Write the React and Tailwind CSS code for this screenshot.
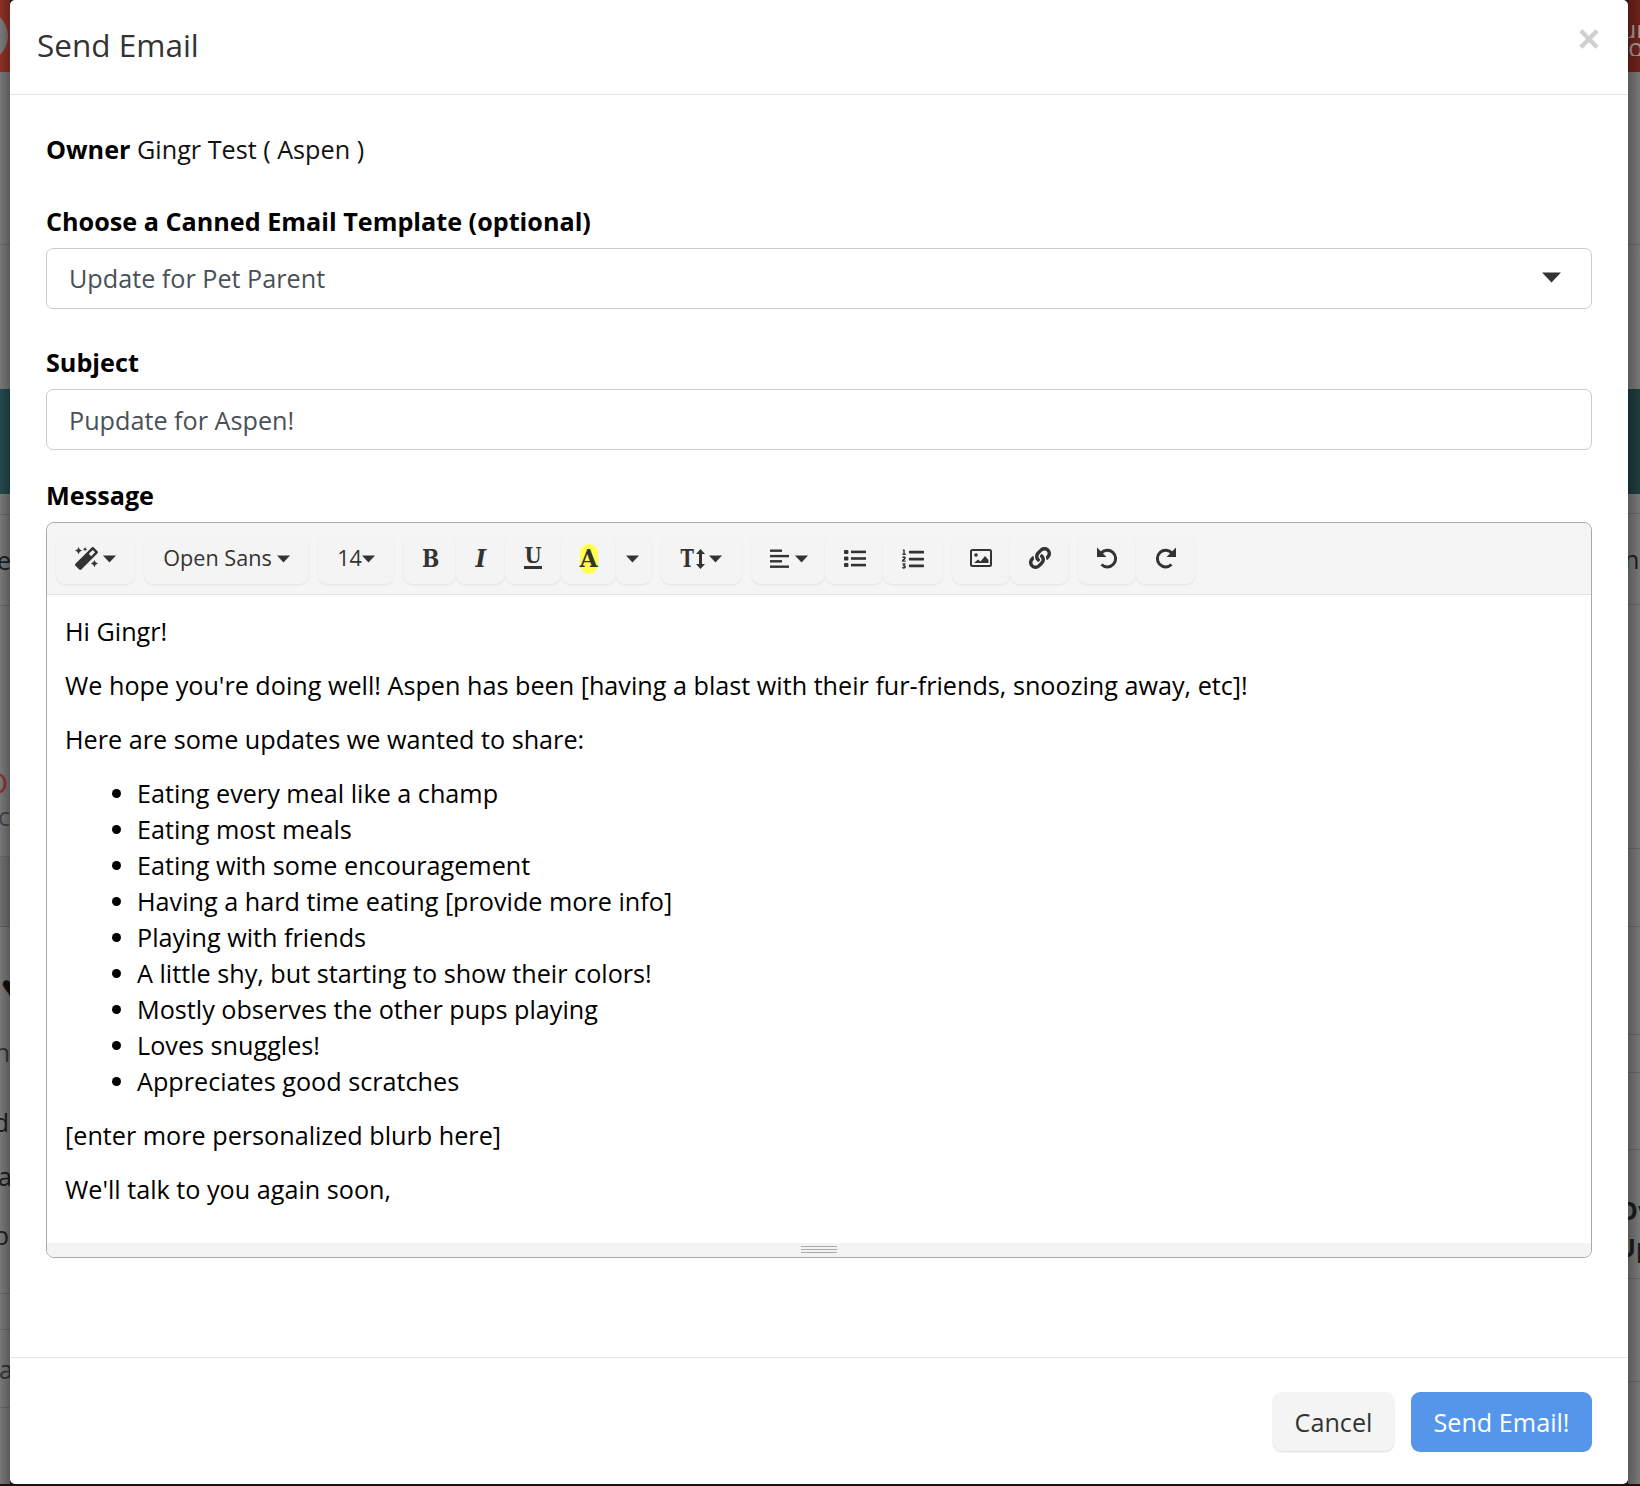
import { FaMagic, FaLink, FaListOl } from 'react-icons/fa'

const updates = [
  'Eating every meal like a champ',
  'Eating most meals',
  'Eating with some encouragement',
  'Having a hard time eating [provide more info]',
  'Playing with friends',
  'A little shy, but starting to show their colors!',
  'Mostly observes the other pups playing',
  'Loves snuggles!',
  'Appreciates good scratches',
]

function Caret({ className = '' }) {
  return (
    <svg width="13" height="8" viewBox="0 0 13 8" className={className}>
      <path d="M0 0.5h13L6.5 7.5z" fill="#333" />
    </svg>
  )
}

function ToolButton({ w, children }) {
  return (
    <button className={`${w} h-[50px] flex items-center justify-center gap-[5px] rounded-[9px] bg-[#f4f4f4] text-[#333] shadow-[0_1px_2px_rgba(0,0,0,0.08)]`}>
      {children}
    </button>
  )
}

function AlignIcon() {
  return (
    <svg width="20" height="20" viewBox="0 0 20 20" fill="#333" className="ml-[2px]">
      <rect x="0" y="0.500" width="12" height="2.4" />
      <rect x="0" y="5.900" width="19" height="2.4" />
      <rect x="0" y="11.100" width="12" height="2.4" />
      <rect x="0" y="16.500" width="19" height="2.4" />
    </svg>
  )
}

function BulletIcon() {
  return (
    <svg width="22" height="19" viewBox="0 0 22 19" fill="#333" className="ml-[2px] -mt-[1px]">
      <rect x="0" y="1" width="4.4" height="4" rx="1" />
      <rect x="7" y="1.6" width="15" height="2.6" />
      <rect x="0" y="7.5" width="4.4" height="4" rx="1" />
      <rect x="7" y="8.2" width="15" height="2.6" />
      <rect x="0" y="14" width="4.4" height="4" rx="1" />
      <rect x="7" y="14.8" width="15" height="2.6" />
    </svg>
  )
}

function ImageIcon() {
  return (
    <svg width="22" height="18" viewBox="0 0 22 18" className="-mt-[2px]">
      <rect x="1" y="1" width="20" height="16" rx="1.5" fill="none" stroke="#333" strokeWidth="2" />
      <circle cx="6" cy="6" r="1.8" fill="#333" />
      <path d="M4 14l4-3.5 2.5 2L15 7l3.5 4v3z" fill="#333" />
    </svg>
  )
}

function ResizeArrow() {
  return (
    <svg width="9" height="20" viewBox="0 0 9 20" fill="#333">
      <path d="M4.5 0L9 5H6v10h3l-4.500 5L0 15h3V5H0z" />
    </svg>
  )
}

function UndoIcon({ className = '' }) {
  return (
    <svg width="22" height="22" viewBox="0 0 22 22" className={`-mt-[2px] ${className}`}>
      <path d="M5 6.200A8.300 8.300 0 1 1 5.500 17.500" fill="none" stroke="#333" strokeWidth="3" />
      <path d="M1 0.500v9.500h9.500z" fill="#333" />
    </svg>
  )
}

const slab = "font-['DejaVu_Serif',serif] font-bold text-[25px] leading-none"

function Toolbar() {
  return (
    <div className="h-[72px] flex items-center gap-[9px] pl-[9px] bg-[#f5f5f5] border-b border-[#e2e2e2] rounded-t-[7px]">
      <ToolButton w="w-[79px]">
        <FaMagic size={23} />
        <Caret />
      </ToolButton>
      <ToolButton w="w-[165px]">
        <span className="text-[21.6px] pb-[2px]">Open Sans</span>
        <Caret />
      </ToolButton>
      <ToolButton w="w-[76px]">
        <span className="text-[21.6px] pb-[2px]">14</span>
        <Caret className="-ml-[5px]" />
      </ToolButton>
      <div className="flex">
        <ToolButton w="w-[53px]"><span className={`${slab} scale-x-[0.82] ml-[2px]`}>B</span></ToolButton>
        <ToolButton w="w-[49px]"><span className={`${slab} italic scale-x-[0.9]`}>I</span></ToolButton>
        <ToolButton w="w-[56px]">
          <span className="flex flex-col items-center gap-[2px] -mt-[2px]">
            <span className="font-['DejaVu_Serif',serif] font-bold text-[23px] leading-[18px] scale-x-[0.85]">U</span>
            <span className="w-[18px] h-[2.500px] bg-[#333]" />
          </span>
        </ToolButton>
        <ToolButton w="w-[55px]">
          <span className="w-[18px] h-[30px] flex items-center justify-center rounded-[9px] bg-[#ffff4d]">
            <span className={`${slab} scale-x-[0.92]`}>A</span>
          </span>
        </ToolButton>
        <ToolButton w="w-[36px]"><Caret className="-ml-[4px]" /></ToolButton>
      </div>
      <ToolButton w="w-[81px]">
        <span className="flex items-center gap-[1px] -ml-[1px]">
          <span className={`${slab} scale-x-[0.72] -mx-[2px]`}>T</span>
          <ResizeArrow />
        </span>
        <Caret className="-ml-[1px]" />
      </ToolButton>
      <div className="flex">
        <ToolButton w="w-[74px]"><AlignIcon /><Caret /></ToolButton>
        <ToolButton w="w-[58px]"><BulletIcon /></ToolButton>
        <ToolButton w="w-[60px]"><FaListOl size={22} /></ToolButton>
      </div>
      <div className="flex">
        <ToolButton w="w-[58px]"><ImageIcon /></ToolButton>
        <ToolButton w="w-[59px]"><span className="-mt-[2px]"><FaLink size={22} /></span></ToolButton>
      </div>
      <div className="flex">
        <ToolButton w="w-[58px]"><UndoIcon /></ToolButton>
        <ToolButton w="w-[59px]"><UndoIcon className="-scale-x-100" /></ToolButton>
      </div>
    </div>
  )
}

// the dimmed page that shows on both sides of the modal
function Strip({ side, rows }) {
  return (
    <div className={`relative ${side === 'left' ? 'w-[10px]' : 'w-[12px]'} shrink-0 flex flex-col overflow-hidden bg-[#777] text-[#1c1c1c] text-[25px] leading-[36px]`}>
      {rows.map((r, i) => (
        <div key={i} style={{ height: r.h, background: r.bg, color: r.color, borderBottom: r.line ? '1px solid rgba(0,0,0,0.14)' : undefined, fontWeight: r.bold ? 700 : 400, fontSize: r.size }}
          className={`shrink-0 flex items-center whitespace-nowrap ${side === 'left' ? 'justify-end' : 'justify-start'}`}>
          {r.text && <span className="shrink-0" style={{ marginLeft: r.ml, marginRight: r.mr }}>{r.text}</span>}
          {r.blob && <div className="shrink-0 w-[52px] h-[52px] rounded-full bg-[#787878] mr-[2px]" />}
        </div>
      ))}
      <div className={`absolute inset-0 ${side === 'left' ? 'bg-gradient-to-r' : 'bg-gradient-to-l'} from-transparent to-black/25`} />
    </div>
  )
}

const leftRows = [
  { h: 72, bg: '#8c3026', blob: true },
  { h: 173, line: true },
  { h: 144 },
  { h: 105, bg: '#23494a' },
  { h: 21, line: true },
  { h: 91, line: true, text: 'se', mr: -1 },
  { h: 159 },
  { h: 36, text: 'D', color: '#8c3026', mr: 2, size: 29 },
  { h: 30, text: 'ic', color: '#444' },
  { h: 26, line: true },
  { h: 70, line: true, bg: '#6f6f6f' },
  { h: 41 },
  { h: 36, text: '♥', mr: -10, color: '#111', size: 32 },
  { h: 30 },
  { h: 36, text: 'n', color: '#333' },
  { h: 34 },
  { h: 36, text: 'd', mr: 1 },
  { h: 18 },
  { h: 36, text: 'a', mr: -2 },
  { h: 23 },
  { h: 36, text: 'o', mr: 1 },
  { h: 41, line: true },
  { h: 36, line: true },
  { h: 78, line: true, text: 'ta', color: '#333', mr: -3 },
  { h: 76 },
]

const rightRows = [
  { h: 20, bg: '#6d2219' },
  { h: 18, bg: '#6d2219', text: 'up', color: '#a09a98', ml: -7 },
  { h: 18, bg: '#6d2219', text: 'lo', color: '#a09a98', ml: -6 },
  { h: 16, bg: '#6d2219' },
  { h: 173, line: true },
  { h: 144 },
  { h: 105, bg: '#1f3c3d' },
  { h: 20, line: true },
  { h: 91, line: true, text: 'n', ml: -4 },
  { h: 244, line: true },
  { h: 78, line: true },
  { h: 108, line: true },
  { h: 38, line: true },
  { h: 77, line: true },
  { h: 42 },
  { h: 36, text: 'Ov', bold: true, ml: -10 },
  { h: 38, text: 'Up', bold: true, ml: -11 },
  { h: 13, line: true },
  { h: 103, line: true },
  { h: 102 },
]

export default function App() {
  return (
    <div className="h-[1486px] w-full flex flex-col bg-[#1a1010] font-['Open_Sans',sans-serif]">
      <div className="h-[1484px] flex">
        <Strip side="left" rows={leftRows} />

        <div className="flex-1 min-w-0 flex flex-col bg-white rounded-[5px] text-[25.2px] leading-[36px]">
          <div className="h-[95px] shrink-0 flex justify-between border-b border-[#e5e5e5] pl-[27px] pr-[28px]">
            <h4 className="mt-[27px] text-[31.5px] leading-[36px] text-[#333]">Send Email</h4>
            <span className="mt-[20px] font-['Liberation_Sans',sans-serif] font-bold text-[38px] leading-[38px] text-[#cfcfcf]">×</span>
          </div>

          <div className="flex-1 px-[36px] pt-[36px]">
            <div className="text-[#111]"><b className="text-black">Owner</b> Gingr Test ( Aspen )</div>

            <label className="block mt-[36px] mb-[9px] font-bold text-black">Choose a Canned Email Template (optional)</label>
            <div className="h-[61px] flex items-center justify-between pl-[22px] pr-[30px] pb-[1px] border border-[#ccc] rounded-[7px] text-[#495057]">
              Update for Pet Parent
              <svg width="19" height="11" viewBox="0 0 19 11" className="-mt-[1px]"><path d="M0 0.5h19L9.5 10.5z" fill="#333" /></svg>
            </div>

            <label className="block mt-[35px] mb-[9px] font-bold text-black">Subject</label>
            <div className="h-[61px] flex items-center pl-[22px] border border-[#ccc] rounded-[7px] text-[#495057]">
              Pupdate for Aspen!
            </div>

            <label className="block mt-[27px] mb-[9px] font-bold text-black">Message</label>
            <div className="border border-[#a9a9a9] rounded-[8px] overflow-hidden">
              <Toolbar />
              <div className="p-[18px] text-black">
                <p>Hi Gingr!</p>
                <p className="mt-[18px]">We hope you're doing well! Aspen has been [having a blast with their fur-friends, snoozing away, etc]!</p>
                <p className="mt-[18px]">Here are some updates we wanted to share:</p>
                <ul className="mt-[18px] pl-[72px] list-disc">
                  {updates.map(u => <li key={u}>{u}</li>)}
                </ul>
                <p className="mt-[18px]">[enter more personalized blurb here]</p>
                <p className="mt-[18px] mb-[18px]">We'll talk to you again soon,</p>
              </div>
              <div className="h-[14px] flex flex-col items-center justify-center gap-[2px] bg-[#f3f3f3] pb-[2px]">
                <div className="w-[36px] h-px bg-[#aaa]" />
                <div className="w-[36px] h-px bg-[#aaa]" />
                <div className="w-[36px] h-px bg-[#aaa]" />
              </div>
            </div>
          </div>

          <div className="h-[127px] shrink-0 flex justify-end gap-[17px] pt-[34px] pr-[36px] border-t border-[#e5e5e5]">
            <button className="w-[121px] h-[59px] rounded-[9px] bg-[#f4f4f4] text-[#333] shadow-[0_1px_2px_rgba(0,0,0,0.15)]">Cancel</button>
            <button className="w-[181px] h-[60px] rounded-[9px] bg-[#5596eb] text-white">Send Email!</button>
          </div>
        </div>

        <Strip side="right" rows={rightRows} />
      </div>
    </div>
  )
}
